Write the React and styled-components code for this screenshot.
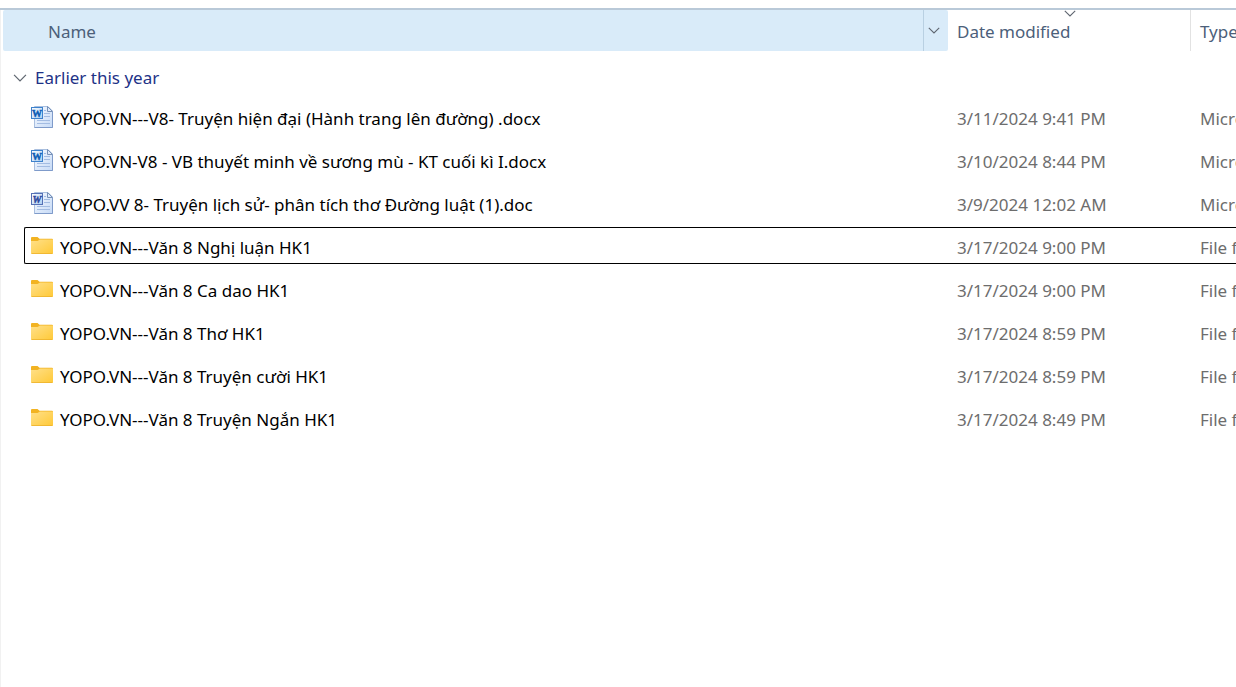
import React, { useState } from "react";
import styled, { createGlobalStyle, css } from "styled-components";

const GlobalStyle = createGlobalStyle`
  *, *::before, *::after { box-sizing: border-box; }
  body {
    margin: 0;
    background: #ffffff;
    font-family: "Noto Sans", "Open Sans", sans-serif;
    font-size: 17px;
    line-height: 24px;
  }
`;

const Pane = styled.main`
  min-height: 100vh;
  padding-top: 8px;
  overflow: hidden;
  display: flex;
  flex-direction: column;
`;

const Content = styled.section`
  flex: 1;
  border-top: 2px solid #b9c9d8;
  box-shadow: inset 1px 0 0 #f1f1f1;
`;

const FileTable = styled.table`
  width: 100%;
  table-layout: fixed;
  border-collapse: collapse;
`;

const Column = styled.col`
  width: ${(p) => p.$width || "auto"};
`;

const HeaderCell = styled.th`
  position: relative;
  height: 41px;
  padding: 0;
  font-weight: 400;
  text-align: left;
  overflow: hidden;
`;

const HeaderBox = styled.div`
  display: flex;
  height: 41px;
  margin-left: ${(p) => (p.$active ? "3px" : "0")};
  background: ${(p) => (p.$active ? "#d9ebf9" : "transparent")};
  border-radius: ${(p) => (p.$active ? "2px" : "0")};
  border-right: ${(p) => (p.$divider ? "1px solid #e2e2e2" : "none")};
`;

const PlainButton = styled.button`
  border: 0;
  padding: 0;
  background: none;
  font: inherit;
  cursor: default;
`;

const SortButton = styled(PlainButton)`
  flex: 1;
  padding-top: 2px;
  padding-left: ${(p) => (p.$indent ? "45px" : "9px")};
  color: #4c607a;
  text-align: left;
  white-space: nowrap;
`;

const FilterButton = styled(PlainButton)`
  display: flex;
  align-items: center;
  justify-content: center;
  width: 25px;
  padding-right: 4px;
  border-left: 1px solid #b9d0e2;
`;

const SortMark = styled.span`
  position: absolute;
  top: 0;
  left: 0;
  right: 0;
  display: flex;
  justify-content: center;
  pointer-events: none;
`;

const GroupCell = styled.td`
  height: 44px;
  padding: 10px 0 0 13px;
`;

const GroupButton = styled(PlainButton)`
  display: flex;
  align-items: center;
  gap: 8px;
  color: #1e3287;
`;

const Cell = styled.td`
  padding: 3px 0;
  overflow: hidden;
`;

const CellBox = styled.div`
  display: flex;
  align-items: center;
  height: 37px;
  padding-top: 4px;
  padding-left: 9px;
  border: 0 solid transparent;
  border-width: 1px 0;
  color: #6d6d6d;
  white-space: nowrap;
  ${(p) => p.$focused && css`border-color: #000000;`}
`;

const NameBox = styled(CellBox)`
  gap: 6px;
  margin-left: 24px;
  padding-left: 5px;
  border-left-width: 1px;
  border-radius: 2px 0 0 2px;
  color: #000000;
`;

const IconSlot = styled.span`
  display: flex;
  height: 28px;
  align-items: flex-start;
`;

function Chevron({ size = 12, color = "#5f6670" }) {
  return (
    <svg width={size} height={size / 2 + 1} viewBox="0 0 12 7" aria-hidden="true">
      <path d="M.8.8 6 6 11.200.8" fill="none" stroke={color} strokeWidth="1.1" />
    </svg>
  );
}

function WordIcon({ legacy }) {
  return (
    <svg width="24" height="24" viewBox="0 0 24 24" aria-hidden="true">
      <defs>
        <linearGradient id="sheet" x1="0" y1="0" x2="1" y2="1">
          <stop offset="0" stopColor="#f8fbff" />
          <stop offset="1" stopColor="#c6daf6" />
        </linearGradient>
        <linearGradient id="badge" x1="0" y1="0" x2="1" y2="1">
          <stop offset="0" stopColor="#ffffff" />
          <stop offset="1" stopColor="#a9cdf2" />
        </linearGradient>
      </defs>
      <path d="M4.500 1.500H18L22.500 6V22.500H4.500Z" fill="url(#sheet)" stroke="#a9bfdf" />
      <path d="M4.500 22.500H22.500V7" fill="none" stroke="#7f9bca" />
      <path d="M17.500 1.500V6.500H22.500Z" fill="#dfeafa" stroke="#7892b9" />
      <path d="M14 5.500H16M14 8.500H20M14 11.500H20M7 15.500H20M7 18.500H20" stroke="#a3bce2" />
      <rect x="1.500" y="2.500" width="11" height="11" fill="url(#badge)" stroke={legacy ? "#5570b5" : "#3e82cc"} />
      <text
        x="7"
        y="12"
        textAnchor="middle"
        fontFamily="Liberation Serif, serif"
        fontWeight="700"
        fontStyle={legacy ? "italic" : "normal"}
        fontSize="10"
        fill={legacy ? "#2c479c" : "#0d5cb4"}
        stroke={legacy ? "#2c479c" : "#0d5cb4"}
        strokeWidth=".4"
      >
        W
      </text>
    </svg>
  );
}

function FolderIcon() {
  return (
    <svg width="24" height="24" viewBox="0 0 24 24" aria-hidden="true">
      <defs>
        <linearGradient id="folder" x1="0" y1="0" x2="1" y2="1">
          <stop offset="0" stopColor="#ffe08a" />
          <stop offset="1" stopColor="#ffc937" />
        </linearGradient>
      </defs>
      <path d="M1 4Q1 3 2 3H7.500L9.500 4.700H22Q23 4.700 23 5.700V9H1Z" fill="#f2b322" />
      <path d="M1 7H7.500L10 5.500H23V19Q23 20 22 20H2Q1 20 1 19Z" fill="url(#folder)" />
      <path d="M1.500 19.500H22.500" stroke="#eeb32c" strokeWidth=".8" />
    </svg>
  );
}

const files = [
  { name: "YOPO.VN---V8- Truyện hiện đại (Hành trang lên đường) .docx", date: "3/11/2024 9:41 PM", kind: "docx" },
  { name: "YOPO.VN-V8 - VB thuyết minh về sương mù - KT cuối kì I.docx", date: "3/10/2024 8:44 PM", kind: "docx" },
  { name: "YOPO.VV 8- Truyện lịch sử- phân tích thơ Đường luật (1).doc", date: "3/9/2024 12:02 AM", kind: "doc" },
  { name: "YOPO.VN---Văn 8 Nghị luận HK1", date: "3/17/2024 9:00 PM", kind: "folder" },
  { name: "YOPO.VN---Văn 8 Ca dao HK1", date: "3/17/2024 9:00 PM", kind: "folder" },
  { name: "YOPO.VN---Văn 8 Thơ HK1", date: "3/17/2024 8:59 PM", kind: "folder" },
  { name: "YOPO.VN---Văn 8 Truyện cười HK1", date: "3/17/2024 8:59 PM", kind: "folder" },
  { name: "YOPO.VN---Văn 8 Truyện Ngắn HK1", date: "3/17/2024 8:49 PM", kind: "folder" },
];

function FileRow({ file, focused, onFocus }) {
  const isFolder = file.kind === "folder";
  return (
    <tr onClick={onFocus}>
      <Cell>
        <NameBox $focused={focused}>
          <IconSlot>{isFolder ? <FolderIcon /> : <WordIcon legacy={file.kind === "doc"} />}</IconSlot>
          {file.name}
        </NameBox>
      </Cell>
      <Cell>
        <CellBox $focused={focused}>{file.date}</CellBox>
      </Cell>
      <Cell>
        <CellBox $focused={focused}>{isFolder ? "File f" : "Micro"}</CellBox>
      </Cell>
    </tr>
  );
}

export default function App() {
  const [open, setOpen] = useState(true);
  const [focused, setFocused] = useState(3);
  return (
    <Pane>
      <GlobalStyle />
      <Content>
        <FileTable>
          <colgroup>
            <Column />
            <Column $width="243px" />
            <Column $width="45px" />
          </colgroup>
          <thead>
            <tr>
              <HeaderCell scope="col">
                <HeaderBox $active>
                  <SortButton type="button" $indent>Name</SortButton>
                  <FilterButton type="button" aria-label="Filter by name">
                    <Chevron />
                  </FilterButton>
                </HeaderBox>
              </HeaderCell>
              <HeaderCell scope="col" aria-sort="descending">
                <HeaderBox $divider>
                  <SortButton type="button">Date modified</SortButton>
                </HeaderBox>
                <SortMark><Chevron /></SortMark>
              </HeaderCell>
              <HeaderCell scope="col">
                <HeaderBox>
                  <SortButton type="button">Type</SortButton>
                </HeaderBox>
              </HeaderCell>
            </tr>
          </thead>
          <tbody>
            <tr>
              <GroupCell colSpan={3}>
                <GroupButton type="button" aria-expanded={open} onClick={() => setOpen(!open)}>
                  <Chevron size={14} />
                  Earlier this year
                </GroupButton>
              </GroupCell>
            </tr>
            {open &&
              files.map((file, i) => (
                <FileRow key={file.name} file={file} focused={i === focused} onFocus={() => setFocused(i)} />
              ))}
          </tbody>
        </FileTable>
      </Content>
    </Pane>
  );
}
